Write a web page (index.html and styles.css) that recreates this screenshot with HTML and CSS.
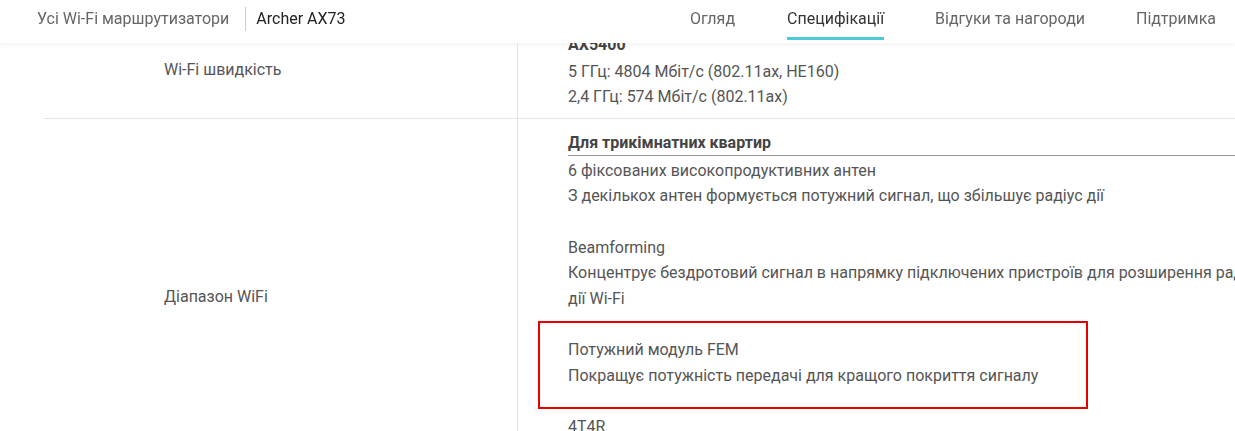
FILE: index.html
```html
<!DOCTYPE html>
<html lang="uk">
<head>
<meta charset="utf-8">
<title>Archer AX73 — Специфікації</title>
<link rel="stylesheet" href="styles.css">
</head>
<body>
<header class="topbar">
  <div class="crumbs">
    <span class="crumb">Усі Wi-Fi маршрутизатори</span>
    <span class="crumb-sep"></span>
    <span class="crumb crumb-current">Archer AX73</span>
  </div>
  <nav class="tabs">
    <a class="tab">Огляд</a>
    <a class="tab tab-active">Специфікації</a>
    <a class="tab">Відгуки та нагороди</a>
    <a class="tab">Підтримка</a>
  </nav>
</header>

<main class="spec">
  <div class="row">
    <div class="label">Wi-Fi швидкість</div>
    <div class="value">
      <p class="strong first">AX5400</p>
      <p>5 ГГц: 4804 Мбіт/с (802.11ax, HE160)</p>
      <p>2,4 ГГц: 574 Мбіт/с (802.11ax)</p>
    </div>
  </div>
  <div class="row">
    <div class="label">Діапазон WiFi</div>
    <div class="value">
      <p class="strong heading">Для трикімнатних квартир</p>
      <p>6 фіксованих високопродуктивних антен</p>
      <p>З декількох антен формується потужний сигнал, що збільшує радіус дії</p>
      <p class="gap">Beamforming</p>
      <p>Концентрує бездротовий сигнал в напрямку підключених пристроїв для розширення радіусу дії Wi-Fi</p>
      <div class="marked gap">
        <p>Потужний модуль FEM</p>
        <p>Покращує потужність передачі для кращого покриття сигналу</p>
        <span class="highlight"></span>
      </div>
      <p class="gap">4T4R</p>
      <p>Чотири потоки для передачі та прийому даних</p>
    </div>
  </div>
</main>
</body>
</html>
```

FILE: styles.css
```css
html, body {
  margin: 0;
  padding: 0;
  overflow: hidden;
  background: #fff;
}

body {
  font-family: Roboto, "Noto Sans", "Liberation Sans", sans-serif;
  font-size: 16px;
  color: #555;
  width: 1235px;
  height: 431px;
}

.topbar {
  position: fixed;
  top: 0;
  left: 0;
  right: 0;
  height: 43px;
  background: #fff;
  box-shadow: 0 2px 4px rgba(0, 0, 0, 0.05);
  display: flex;
  align-items: stretch;
  justify-content: space-between;
  padding: 0 19px 0 37px;
  z-index: 10;
}

.crumbs {
  display: flex;
  align-items: center;
  height: 37px;
}

.crumb {
  color: #666;
  font-size: 16px;
}

.crumb-current {
  color: #222;
}

.crumb-sep {
  width: 1px;
  height: 24px;
  background: #ccc;
  margin: 0 10px 0 16px;
}

.tabs {
  display: flex;
  gap: 51px;
}

.tab {
  display: flex;
  align-items: center;
  height: 37px;
  padding-bottom: 3px;
  color: #666;
  font-size: 16px;
  border-bottom: 3px solid transparent;
  box-sizing: content-box;
  cursor: pointer;
}

.tab:first-child {
  margin-right: 1px;
}

.tab-active {
  color: #333;
  border-bottom-color: #4acbd6;
  height: 37px;
  padding-bottom: 0;
}

.spec {
  margin-top: 21.5px;
  margin-left: 44px;
}

.row {
  display: grid;
  grid-template-columns: 473px 766px;
  border-bottom: 1px solid #e5e5e5;
}

.label {
  display: flex;
  align-items: center;
  padding-left: 120px;
  color: #555;
}

.value {
  border-left: 1px solid #e5e5e5;
  padding: 10.2px 0 8.5px 50px;
  line-height: 25.6px;
}

.value p {
  margin: 0;
}

.strong {
  font-weight: 700;
  color: #444;
}

.first {
  margin-bottom: 1.5px !important;
}

.heading {
  border-bottom: 1px solid #999;
  margin-bottom: 1.5px !important;
}

.gap {
  margin-top: 25.6px !important;
}

.marked {
  position: relative;
}

.highlight {
  position: absolute;
  left: -30px;
  top: -15.5px;
  bottom: -20.5px;
  width: 550px;
  border: 2px solid #e80000;
  box-sizing: border-box;
  pointer-events: none;
}
```
